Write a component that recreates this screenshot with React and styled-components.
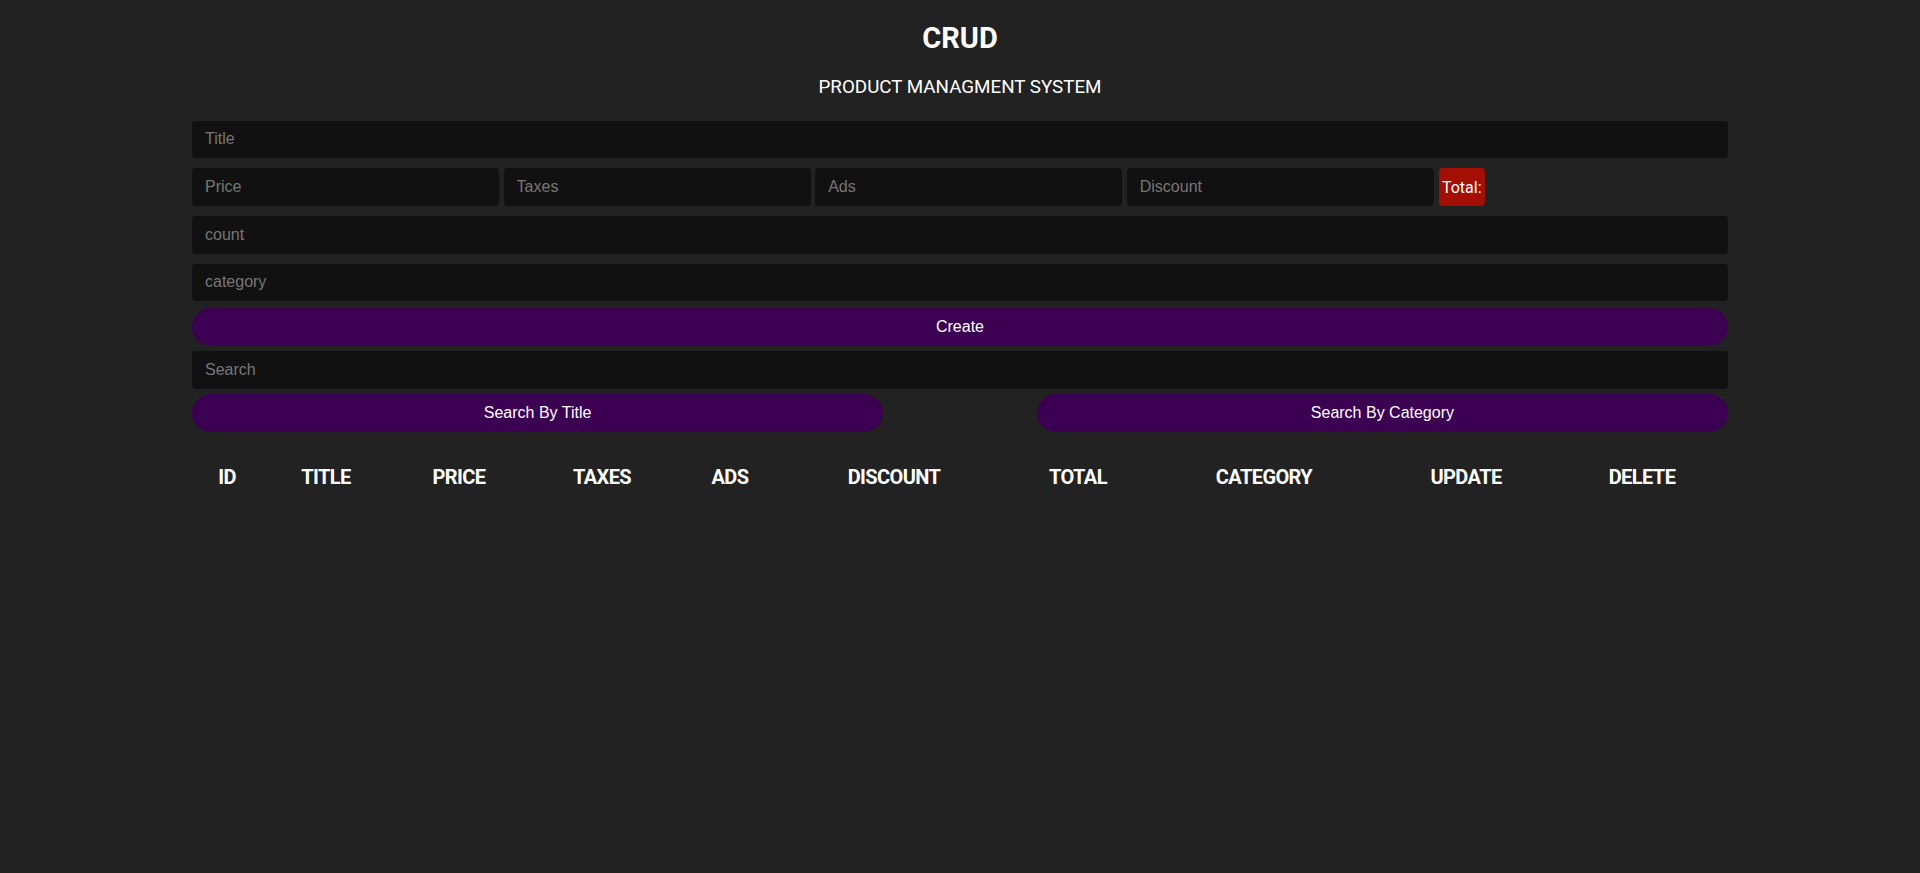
import React from "react";
import styled, { createGlobalStyle } from "styled-components";

const Global = createGlobalStyle`
  html, body { margin: 0; padding: 0; background: #222222; }
  body { font-family: Roboto, "Open Sans", sans-serif; color: #fff; }
  * { box-sizing: border-box; }
`;

const Container = styled.div`
  width: 80%;
  margin: 0 auto;
  padding-bottom: 40px;
`;

const Header = styled.header`
  text-align: center;
  padding-top: 23px;
`;

const Title = styled.h2`
  margin: 0;
  font-family: Roboto, sans-serif;
  font-size: 29px;
  line-height: 30px;
  font-weight: 700;
  color: #fff;
`;

const Subtitle = styled.p`
  margin: 24.5px 0 0;
  font-family: Roboto, sans-serif;
  font-size: 18.8px;
  line-height: 19px;
  font-weight: 400;
  color: #fff;
`;

const Form = styled.div`
  margin-top: 24px;
  display: flex;
  flex-direction: column;
`;

const Field = styled.input`
  display: block;
  width: ${(p) => p.$width || "100%"};
  flex: ${(p) => (p.$width ? `0 0 ${p.$width}` : "none")};
  height: 37.6px;
  margin: 0;
  padding: 0 13px;
  border: none;
  outline: none;
  border-radius: 4px;
  background: #111111;
  color: #fff;
  font-family: "Liberation Sans", Arial, sans-serif;
  font-size: 16px;
  &::placeholder { color: #777777; }
`;

const Row = styled.div`
  display: flex;
  align-items: center;
  gap: 4.4px;
  margin-top: ${(p) => p.$mt || 0}px;
`;

const TotalBadge = styled.small`
  display: flex;
  align-items: center;
  justify-content: center;
  height: 38px;
  padding: 0 3px;
  margin-left: 0.6px;
  border-radius: 4px;
  background: #a30f02;
  color: #fff;
  font-family: Roboto, sans-serif;
  font-size: 16px;
  font-weight: 400;
`;

const Spaced = styled.div`
  margin-top: ${(p) => p.$mt}px;
  display: flex;
  justify-content: ${(p) => p.$justify || "stretch"};
`;

const Pill = styled.button`
  width: ${(p) => p.$width || "100%"};
  height: 38px;
  border: none;
  border-radius: 19px;
  background: #3b0052;
  color: #fff;
  font-family: "Liberation Sans", Arial, sans-serif;
  font-size: 16px;
  cursor: pointer;
`;

const Table = styled.table`
  width: 100%;
  margin-top: 25px;
  border-collapse: collapse;
  table-layout: fixed;
`;

const Th = styled.th`
  width: ${(p) => p.$w}px;
  padding: 10px 0;
  font-family: Roboto, sans-serif;
  font-size: 20px;
  line-height: 20px;
  font-weight: 700;
  letter-spacing: -0.6px;
  color: #fff;
  text-align: center;
  text-transform: uppercase;
`;

const columns = [
  ["id", 70],
  ["title", 128],
  ["price", 138],
  ["taxes", 148],
  ["ads", 108],
  ["discount", 220],
  ["total", 148],
  ["category", 224],
  ["update", 180],
  ["delete", 172],
];

export default function App() {
  return (
    <>
      <Global />
      <Container>
        <Header>
          <Title>CRUD</Title>
          <Subtitle>PRODUCT MANAGMENT SYSTEM</Subtitle>
        </Header>
        <Form>
          <Field placeholder="Title" />
          <Row $mt={10}>
            <Field $width="20%" placeholder="Price" />
            <Field $width="20%" placeholder="Taxes" />
            <Field $width="20%" placeholder="Ads" />
            <Field $width="20%" placeholder="Discount" />
            <TotalBadge>Total:</TotalBadge>
          </Row>
          <Spaced $mt={10}>
            <Field placeholder="count" />
          </Spaced>
          <Spaced $mt={10}>
            <Field placeholder="category" />
          </Spaced>
          <Spaced $mt={7}>
            <Pill>Create</Pill>
          </Spaced>
          <Spaced $mt={5}>
            <Field placeholder="Search" />
          </Spaced>
          <Spaced $mt={5} $justify="space-between">
            <Pill $width="45%">Search By Title</Pill>
            <Pill $width="45%">Search By Category</Pill>
          </Spaced>
        </Form>
        <Table>
          <thead>
            <tr>
              {columns.map(([name, w]) => (
                <Th key={name} $w={w}>{name}</Th>
              ))}
            </tr>
          </thead>
          <tbody />
        </Table>
      </Container>
    </>
  );
}
